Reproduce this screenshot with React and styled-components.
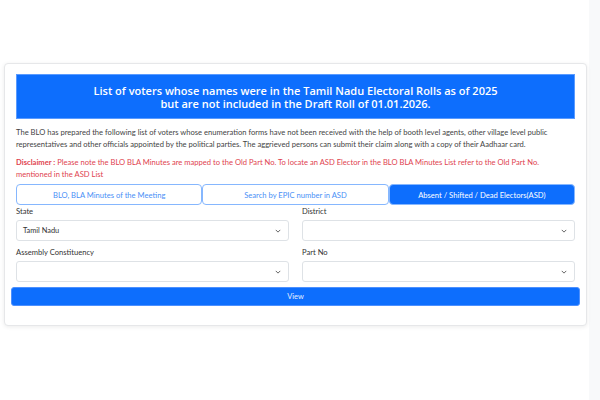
import styled, { createGlobalStyle } from "styled-components";

const GlobalStyle = createGlobalStyle`
  html, body {
    margin: 0;
    padding: 0;
    background: #fff;
  }
  body {
    font-family: "Open Sans", "Liberation Sans", sans-serif;
    color: #212529;
  }
`;

const Page = styled.div`
  height: 400px;
  padding: 63px 0 0 4px;
  box-sizing: border-box;
  background: linear-gradient(to right, #fff 0, #fff 589px, #f8f9fa 589px);
  display: flex;
  align-items: flex-start;
`;

const Card = styled.div`
  width: 583px;
  height: 263px;
  box-sizing: border-box;
  background: #fff;
  border: 1px solid #e6e7e9;
  border-radius: 4px;
  box-shadow: 0 1px 4px rgba(0, 0, 0, 0.08);
  padding: 10px 11px 0 11px;
  display: flex;
  flex-direction: column;
`;

const Banner = styled.div`
  background: #0d6efd;
  color: #fff;
  text-align: center;
  font-family: "Open Sans", sans-serif;
  font-weight: 600;
  font-size: 11px;
  line-height: 13px;
  padding: 9px 0 8px;
  border: 1px solid #5a9bff;
`;

const Note = styled.p`
  margin: 7px 0 0;
  font-family: "Lato", sans-serif;
  font-size: 7.6px;
  line-height: 12px;
  color: #444;
`;

const Disclaimer = styled(Note)`
  margin-top: 6px;
  color: #e0434f;
  b {
    font-weight: 700;
  }
`;

const Tabs = styled.div`
  display: grid;
  grid-template-columns: 1fr 1fr 1fr;
  margin-top: 4px;
`;

const Tab = styled.button`
  height: 21px;
  border: 1px solid #86b7fe;
  border-radius: 4px;
  background: ${(p) => (p.$active ? "#0d6efd" : "#fff")};
  color: ${(p) => (p.$active ? "#fff" : "#4a8ff6")};
  font-family: "Lato", sans-serif;
  font-size: 7.6px;
  padding: 0;
  cursor: pointer;
`;

const Grid = styled.div`
  display: grid;
  grid-template-columns: 1fr 1fr;
  column-gap: 13px;
  row-gap: 6px;
  margin-top: 1px;
`;

const Field = styled.div`
  display: flex;
  flex-direction: column;
  gap: 3px;
`;

const Label = styled.label`
  font-family: "Lato", sans-serif;
  font-size: 7.6px;
  line-height: 11px;
  color: #333;
`;

const SelectBox = styled.div`
  height: 19px;
  border: 1px solid #dee2e6;
  border-radius: 3px;
  display: flex;
  align-items: center;
  justify-content: space-between;
  padding: 0 7px 0 6px;
  font-family: "Lato", sans-serif;
  font-size: 7.4px;
  color: #333;
  background: #fff;
`;

const ViewButton = styled.button`
  margin: 5px -5px 0;
  height: 19px;
  border: 1px solid #4d90fe;
  border-radius: 3px;
  background: #0d6efd;
  color: #e8f0ff;
  font-family: "Lato", sans-serif;
  font-size: 7.4px;
  cursor: pointer;
`;

const Chevron = () => (
  <svg width="6" height="4" viewBox="0 0 8 5">
    <path d="M1 1l3 3 3-3" fill="none" stroke="#555" strokeWidth="1.2" />
  </svg>
);

const Select = ({ value }) => (
  <SelectBox>
    <span>{value}</span>
    <Chevron />
  </SelectBox>
);

const fields = [
  { label: "State", value: "Tamil Nadu" },
  { label: "District", value: "" },
  { label: "Assembly Constituency", value: "" },
  { label: "Part No", value: "" },
];

const tabs = [
  "BLO, BLA Minutes of the Meeting",
  "Search by EPIC number in ASD",
  "Absent / Shifted / Dead Electors(ASD)",
];

const App = () => {
  return (
    <>
      <GlobalStyle />
      <Page>
        <Card>
          <Banner>
            List of voters whose names were in the Tamil Nadu Electoral Rolls as of 2025
            <br />
            but are not included in the Draft Roll of 01.01.2026.
          </Banner>
          <Note>
            The BLO has prepared the following list of voters whose enumeration forms have not been
            received with the help of booth level agents, other village level public representatives
            and other officials appointed by the political parties. The aggrieved persons can submit
            their claim along with a copy of their Aadhaar card.
          </Note>
          <Disclaimer>
            <b>Disclaimer :</b> Please note the BLO BLA Minutes are mapped to the Old Part No. To
            locate an ASD Elector in the BLO BLA Minutes List refer to the Old Part No. mentioned in
            the ASD List
          </Disclaimer>
          <Tabs>
            {tabs.map((t, i) => (
              <Tab key={t} $active={i === 2}>
                {t}
              </Tab>
            ))}
          </Tabs>
          <Grid>
            {fields.map((f) => (
              <Field key={f.label}>
                <Label>{f.label}</Label>
                <Select value={f.value} />
              </Field>
            ))}
          </Grid>
          <ViewButton>View</ViewButton>
        </Card>
      </Page>
    </>
  );
};

export default App;
